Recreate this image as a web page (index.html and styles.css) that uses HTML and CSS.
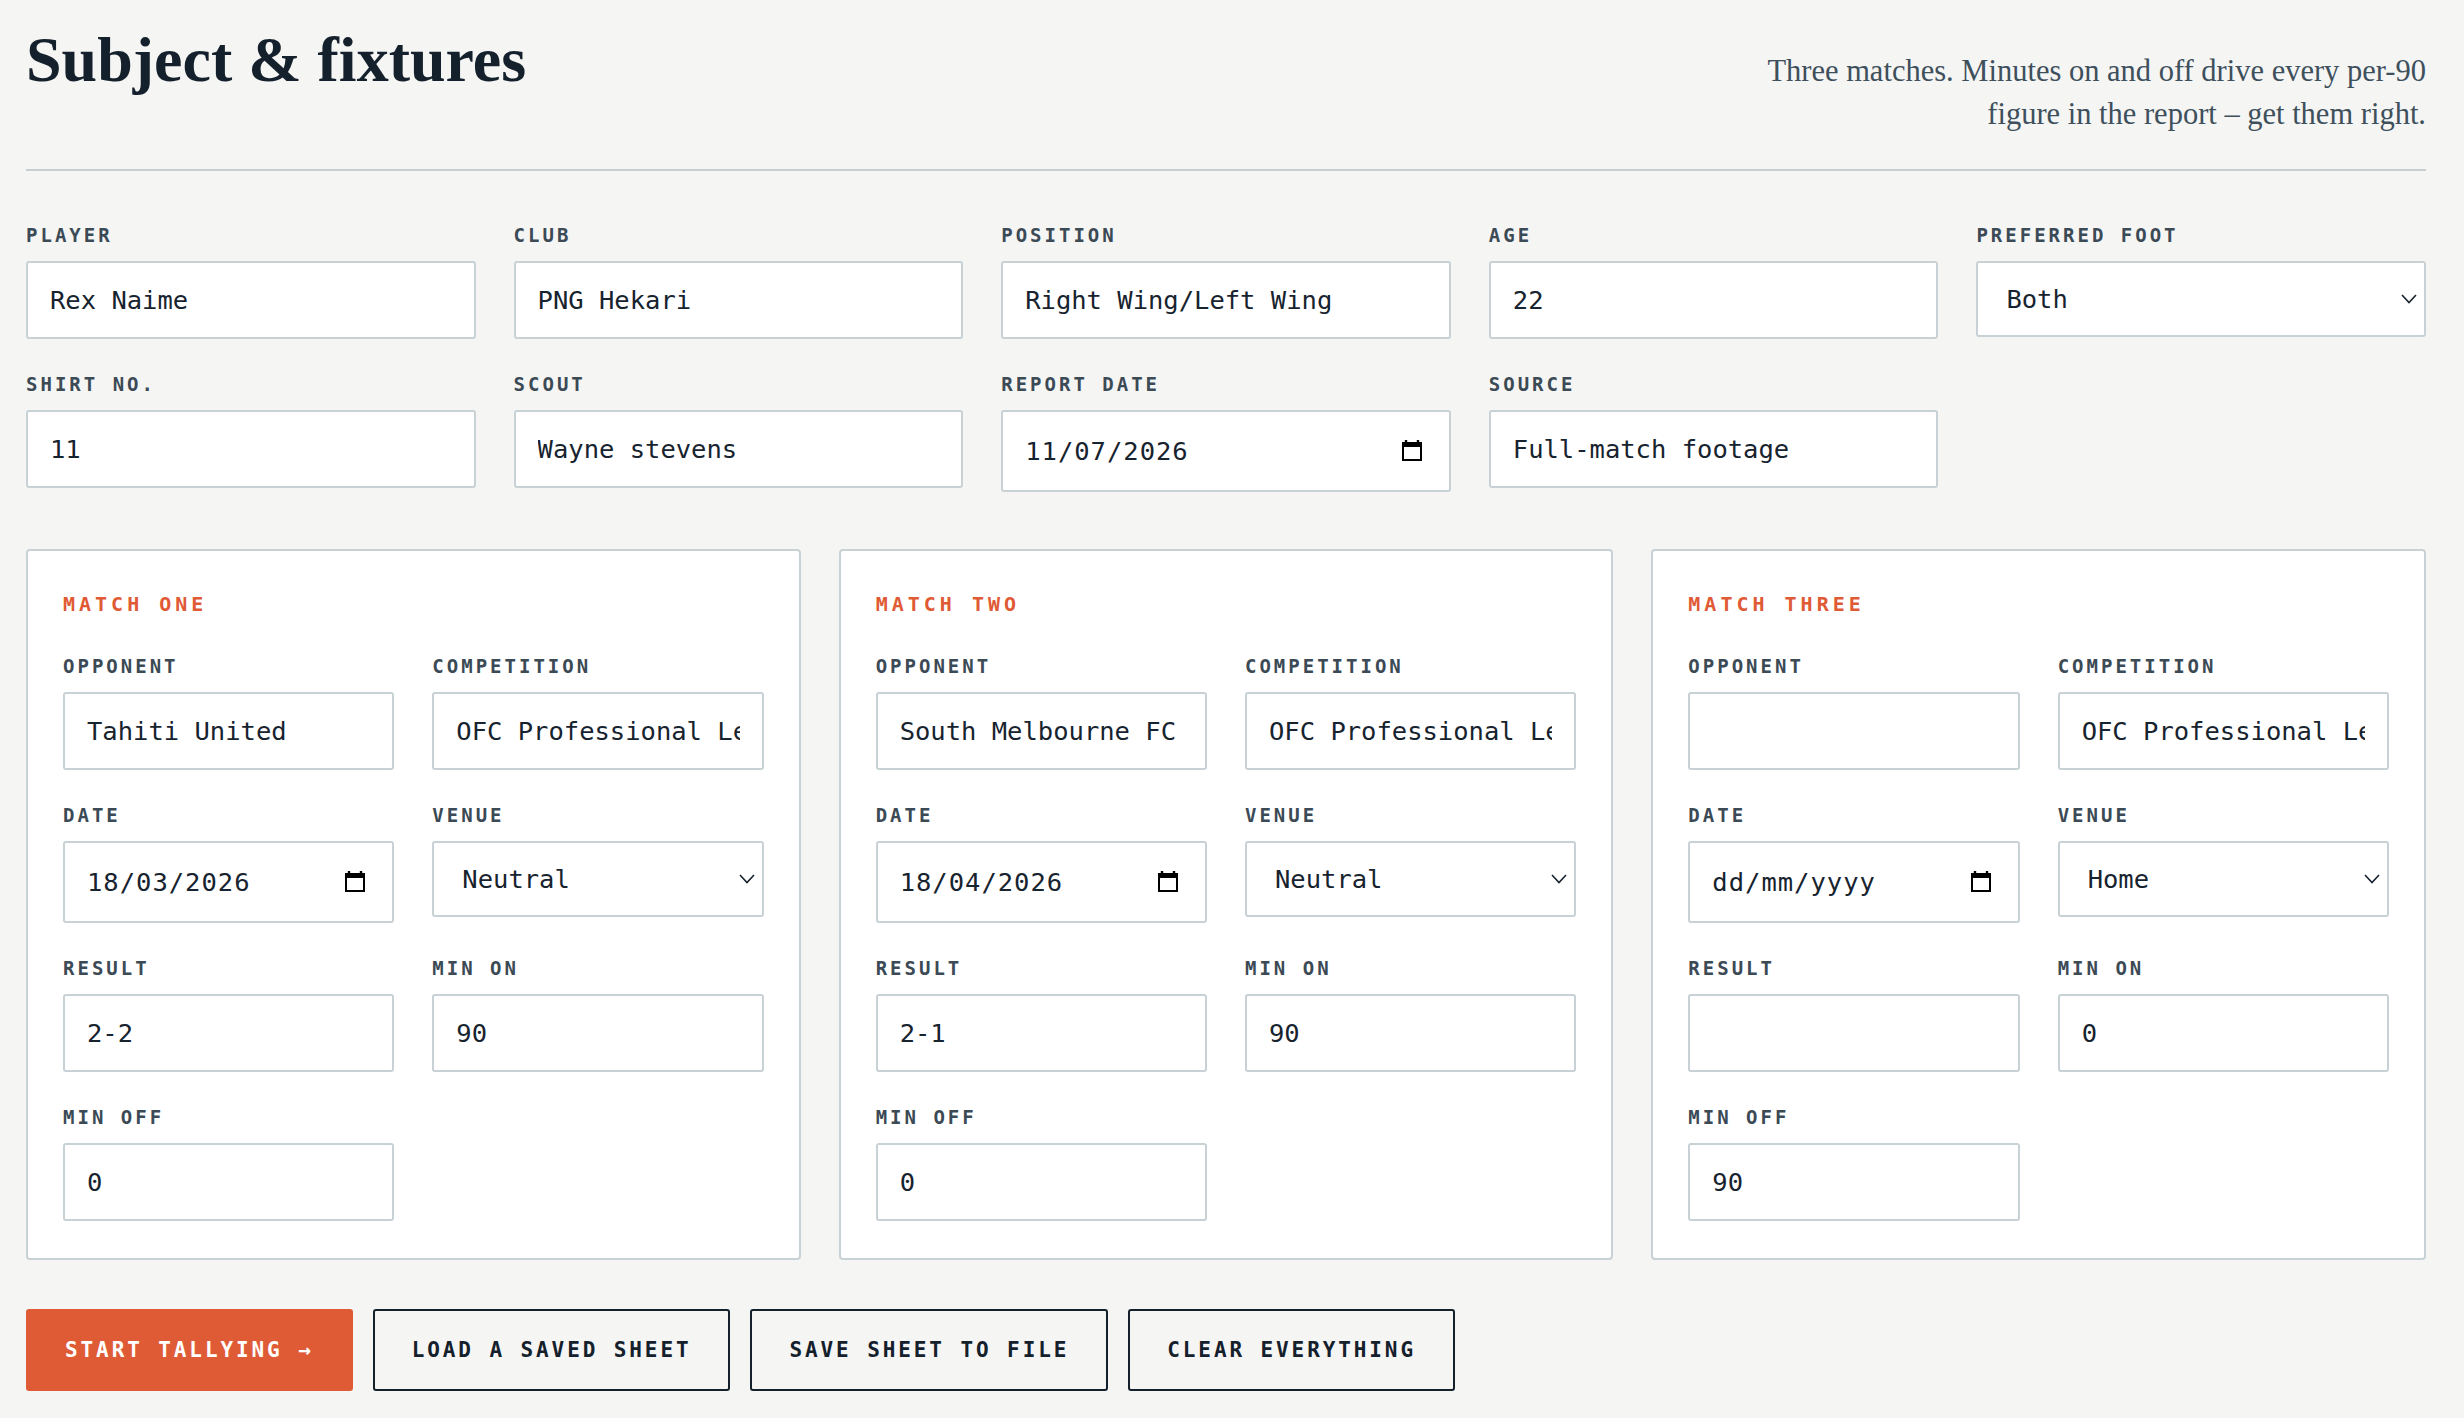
FILE: index.html
```html
<!DOCTYPE html>
<html lang="en">
<head>
  <meta charset="UTF-8" />
  <meta name="viewport" content="width=device-width, initial-scale=1" />
  <title>Subject &amp; fixtures</title>
  <link rel="stylesheet" href="styles.css">
</head>
<body>
  <div class="page">
    <header class="page-head">
      <h1 class="page-title">Subject &amp; fixtures</h1>
      <p class="page-note">Three matches. Minutes on and off drive every per-90 figure in the report – get them right.</p>
    </header>

    <section class="subject">
      <div class="field">
        <label for="player">Player</label>
        <input id="player" type="text" value="Rex Naime" />
      </div>
      <div class="field">
        <label for="club">Club</label>
        <input id="club" type="text" value="PNG Hekari" />
      </div>
      <div class="field">
        <label for="position">Position</label>
        <input id="position" type="text" value="Right Wing/Left Wing" />
      </div>
      <div class="field">
        <label for="age">Age</label>
        <input id="age" type="text" value="22" />
      </div>
      <div class="field">
        <label for="foot">Preferred foot</label>
        <div class="select-wrap">
          <select id="foot">
            <option>Left</option>
            <option>Right</option>
            <option selected>Both</option>
          </select>
          <svg class="chev" width="16" height="10" viewBox="0 0 16 10"><path d="M1 1l7 7.5 7-7.5" fill="none" stroke="#17232e" stroke-width="1.6"/></svg>
        </div>
      </div>
      <div class="field">
        <label for="shirt">Shirt no.</label>
        <input id="shirt" type="text" value="11" />
      </div>
      <div class="field">
        <label for="scout">Scout</label>
        <input id="scout" type="text" value="Wayne stevens" />
      </div>
      <div class="field">
        <label for="report-date">Report date</label>
        <div class="date-wrap">
          <input id="report-date" type="text" value="11/07/2026" />
          <svg class="cal" width="20" height="21" viewBox="0 0 20 21"><path d="M4 0v4M16 0v4" stroke="#000" stroke-width="2.4"/><rect x="1" y="3" width="18" height="17" fill="none" stroke="#000" stroke-width="2"/><rect x="1" y="3" width="18" height="4" fill="#000"/></svg>
        </div>
      </div>
      <div class="field">
        <label for="source">Source</label>
        <input id="source" type="text" value="Full-match footage" />
      </div>
    </section>

    <section class="matches">
      <div class="match">
        <h2>Match one</h2>
        <div class="match-grid">
          <div class="field">
            <label>Opponent</label>
            <input type="text" value="Tahiti United" />
          </div>
          <div class="field">
            <label>Competition</label>
            <input type="text" value="OFC Professional League" />
          </div>
          <div class="field">
            <label>Date</label>
            <div class="date-wrap">
              <input type="text" value="18/03/2026" />
              <svg class="cal" width="20" height="21" viewBox="0 0 20 21"><path d="M4 0v4M16 0v4" stroke="#000" stroke-width="2.4"/><rect x="1" y="3" width="18" height="17" fill="none" stroke="#000" stroke-width="2"/><rect x="1" y="3" width="18" height="4" fill="#000"/></svg>
            </div>
          </div>
          <div class="field">
            <label>Venue</label>
            <div class="select-wrap">
              <select>
                <option>Home</option>
                <option>Away</option>
                <option selected>Neutral</option>
              </select>
              <svg class="chev" width="16" height="10" viewBox="0 0 16 10"><path d="M1 1l7 7.5 7-7.5" fill="none" stroke="#17232e" stroke-width="1.6"/></svg>
            </div>
          </div>
          <div class="field">
            <label>Result</label>
            <input type="text" value="2-2" />
          </div>
          <div class="field">
            <label>Min on</label>
            <input type="text" value="90" />
          </div>
          <div class="field">
            <label>Min off</label>
            <input type="text" value="0" />
          </div>
        </div>
      </div>

      <div class="match">
        <h2>Match two</h2>
        <div class="match-grid">
          <div class="field">
            <label>Opponent</label>
            <input type="text" value="South Melbourne FC" />
          </div>
          <div class="field">
            <label>Competition</label>
            <input type="text" value="OFC Professional League" />
          </div>
          <div class="field">
            <label>Date</label>
            <div class="date-wrap">
              <input type="text" value="18/04/2026" />
              <svg class="cal" width="20" height="21" viewBox="0 0 20 21"><path d="M4 0v4M16 0v4" stroke="#000" stroke-width="2.4"/><rect x="1" y="3" width="18" height="17" fill="none" stroke="#000" stroke-width="2"/><rect x="1" y="3" width="18" height="4" fill="#000"/></svg>
            </div>
          </div>
          <div class="field">
            <label>Venue</label>
            <div class="select-wrap">
              <select>
                <option>Home</option>
                <option>Away</option>
                <option selected>Neutral</option>
              </select>
              <svg class="chev" width="16" height="10" viewBox="0 0 16 10"><path d="M1 1l7 7.5 7-7.5" fill="none" stroke="#17232e" stroke-width="1.6"/></svg>
            </div>
          </div>
          <div class="field">
            <label>Result</label>
            <input type="text" value="2-1" />
          </div>
          <div class="field">
            <label>Min on</label>
            <input type="text" value="90" />
          </div>
          <div class="field">
            <label>Min off</label>
            <input type="text" value="0" />
          </div>
        </div>
      </div>

      <div class="match">
        <h2>Match three</h2>
        <div class="match-grid">
          <div class="field">
            <label>Opponent</label>
            <input type="text" value="" />
          </div>
          <div class="field">
            <label>Competition</label>
            <input type="text" value="OFC Professional League" />
          </div>
          <div class="field">
            <label>Date</label>
            <div class="date-wrap">
              <input type="text" placeholder="dd/mm/yyyy" />
              <svg class="cal" width="20" height="21" viewBox="0 0 20 21"><path d="M4 0v4M16 0v4" stroke="#000" stroke-width="2.4"/><rect x="1" y="3" width="18" height="17" fill="none" stroke="#000" stroke-width="2"/><rect x="1" y="3" width="18" height="4" fill="#000"/></svg>
            </div>
          </div>
          <div class="field">
            <label>Venue</label>
            <div class="select-wrap">
              <select>
                <option selected>Home</option>
                <option>Away</option>
                <option>Neutral</option>
              </select>
              <svg class="chev" width="16" height="10" viewBox="0 0 16 10"><path d="M1 1l7 7.5 7-7.5" fill="none" stroke="#17232e" stroke-width="1.6"/></svg>
            </div>
          </div>
          <div class="field">
            <label>Result</label>
            <input type="text" value="" />
          </div>
          <div class="field">
            <label>Min on</label>
            <input type="text" value="0" />
          </div>
          <div class="field">
            <label>Min off</label>
            <input type="text" value="90" />
          </div>
        </div>
      </div>
    </section>

    <div class="actions">
      <button class="btn btn-primary">Start tallying →</button>
      <button class="btn">Load a saved sheet</button>
      <button class="btn">Save sheet to file</button>
      <button class="btn">Clear everything</button>
    </div>
  </div>
</body>
</html>
```

FILE: styles.css
```css
body {
  margin: 0;
  background-color: #f5f5f4;
  color: #14202b;
  font-family: "DejaVu Sans Mono", monospace;
}
.page {
  padding: 28px 38px 24px 26px;
}
.page-head {
  display: flex;
  justify-content: space-between;
  align-items: baseline;
  padding-bottom: 33px;
  border-bottom: 2px solid #c6d0d4;
}
.page-title {
  margin: 0;
  font-family: "Liberation Serif", serif;
  font-size: 64px;
  line-height: 64px;
  font-weight: bold;
  color: #14202b;
}
.page-note {
  margin: 0;
  max-width: 705px;
  font-family: "Liberation Serif", serif;
  font-size: 30.5px;
  line-height: 43px;
  text-align: right;
  color: #3e505c;
}
.subject {
  display: grid;
  grid-template-columns: repeat(5, 1fr);
  gap: 33px 38px;
  margin-top: 52px;
}
.field {
  display: flex;
  flex-direction: column;
  min-width: 0;
}
.field label {
  margin-bottom: 14px;
  font-size: 19px;
  line-height: 24px;
  font-weight: bold;
  letter-spacing: 3px;
  text-transform: uppercase;
  color: #3b4a55;
}
.field input,
.field select {
  box-sizing: border-box;
  width: 100%;
  height: 78px;
  padding: 0 22px;
  border: 2px solid #c8d1d5;
  border-radius: 3px;
  background-color: #fff;
  font-family: inherit;
  font-size: 25.5px;
  color: #17232e;
}
.field input::placeholder {
  color: #17232e;
  opacity: 1;
}
.select-wrap,
.date-wrap {
  position: relative;
}
.field select {
  height: 76px;
  padding-left: 28px;
  -webkit-appearance: none;
  appearance: none;
}
.select-wrap .chev {
  position: absolute;
  right: 9px;
  top: 33px;
  pointer-events: none;
}
.date-wrap input {
  height: 82px;
  padding-right: 60px;
  letter-spacing: 1px;
}
.date-wrap .cal {
  position: absolute;
  right: 29px;
  top: 30px;
  pointer-events: none;
}
.matches {
  display: grid;
  grid-template-columns: repeat(3, 1fr);
  gap: 38px;
  margin-top: 57px;
}
.match {
  min-width: 0;
  padding: 36px 35px 37px;
  background-color: #fff;
  border: 2px solid #c8d1d5;
  border-radius: 4px;
}
.match h2 {
  margin: 0 0 33px;
  font-size: 20px;
  line-height: 34px;
  letter-spacing: 4px;
  text-transform: uppercase;
  color: #df5a35;
}
.match-grid {
  display: grid;
  grid-template-columns: 1fr 1fr;
  gap: 33px 38px;
}
.actions {
  display: flex;
  gap: 20px;
  margin-top: 49px;
}
.btn {
  padding: 27px 37px;
  border: 2px solid #14202b;
  border-radius: 3px;
  background: transparent;
  font-family: inherit;
  font-size: 21px;
  line-height: 24px;
  font-weight: bold;
  letter-spacing: 2.9px;
  text-transform: uppercase;
  color: #14202b;
  cursor: pointer;
}
.btn-primary {
  background-color: #df5b36;
  border-color: #df5b36;
  color: #fff;
}
```
